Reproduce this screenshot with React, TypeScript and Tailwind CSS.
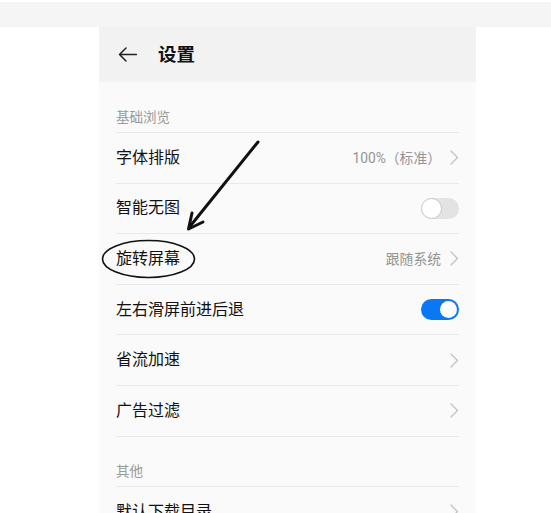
import React from 'react';

const Chevron = () => (
  <svg width="9" height="15" viewBox="0 0 9 15" fill="none" className="shrink-0">
    <path d="M1 1l6.5 6.5L1 14" stroke="#c2c2c2" strokeWidth="1.3" strokeLinecap="round" strokeLinejoin="round" />
  </svg>
);

const Toggle = ({ on }: { on: boolean }) =>
  on ? (
    <div className="w-[38px] h-[21px] rounded-full bg-[#0a78f2] flex items-center justify-end pr-[2px]">
      <div className="w-[17px] h-[17px] rounded-full bg-white" />
    </div>
  ) : (
    <div className="w-[38px] h-[21px] rounded-full bg-[#e3e3e3] flex items-center">
      <div className="w-[21px] h-[21px] rounded-full bg-white border border-[#c9c9c9]" />
    </div>
  );

interface RowProps {
  label: string;
  value?: string;
  toggle?: boolean;
  chevron?: boolean;
}

const Row = ({ label, value, toggle, chevron }: RowProps) => (
  <div className="h-[50.6px] border-t border-[#e9e9e9] flex items-center justify-between">
    <span className="text-[16px] text-[#111] leading-[20px]">{label}</span>
    <div className="flex items-center">
      {value && <span className="text-[13.8px] text-[#949494] leading-[20px] mr-[9px]">{value}</span>}
      {toggle !== undefined && <Toggle on={toggle} />}
      {chevron && <Chevron />}
    </div>
  </div>
);

const SectionTitle = ({ title, first }: { title: string; first?: boolean }) => (
  <div
    className={
      first
        ? 'h-[50px] flex items-end pb-[5.5px]'
        : 'h-[50.6px] border-t border-[#e9e9e9] flex items-end pb-[5.5px]'
    }
  >
    <span className="text-[13.5px] text-[#999] leading-[20px]">{title}</span>
  </div>
);

export default function App() {
  return (
    <div
      className="relative w-[551px] h-[513px] bg-white overflow-hidden"
      style={{ fontFamily: 'Roboto, "Noto Sans CJK SC", sans-serif' }}
    >
      <div className="pt-[2px]">
        <div className="h-[25px] bg-[#f5f5f5]" />
      </div>

      <div className="ml-[99px] w-[377px] h-[486px] bg-[#fafafa]">
        <div className="h-[55px] bg-[#f2f2f2] flex items-center pl-[19px]">
          <svg width="19" height="15" viewBox="0 0 19 15" fill="none">
            <path d="M18.5 7.5H1.5M8 1L1.5 7.5 8 14" stroke="#222" strokeWidth="1.5" strokeLinecap="round" strokeLinejoin="round" />
          </svg>
          <span className="ml-[21px] text-[18.5px] font-bold text-[#111] leading-[24px]">设置</span>
        </div>

        <div className="px-[17px]">
          <SectionTitle title="基础浏览" first />
          <Row label="字体排版" value="100%（标准）" chevron />
          <Row label="智能无图" toggle={false} />
          <Row label="旋转屏幕" value="跟随系统" chevron />
          <Row label="左右滑屏前进后退" toggle />
          <Row label="省流加速" chevron />
          <Row label="广告过滤" chevron />
          <SectionTitle title="其他" />
          <Row label="默认下载目录" chevron />
        </div>
      </div>

      {/* annotation: arrow + circle */}
      <svg className="absolute inset-0 pointer-events-none" width="551" height="513" viewBox="0 0 551 513" fill="none">
        <path d="M258 142L189.5 227" stroke="#111" strokeWidth="3" strokeLinecap="round" />
        <path d="M203 222L188.5 229L192 213" stroke="#111" strokeWidth="3" strokeLinecap="round" strokeLinejoin="round" />
        <ellipse cx="148.5" cy="259" rx="46" ry="18.5" stroke="#111" strokeWidth="1.6" />
      </svg>
    </div>
  );
}
